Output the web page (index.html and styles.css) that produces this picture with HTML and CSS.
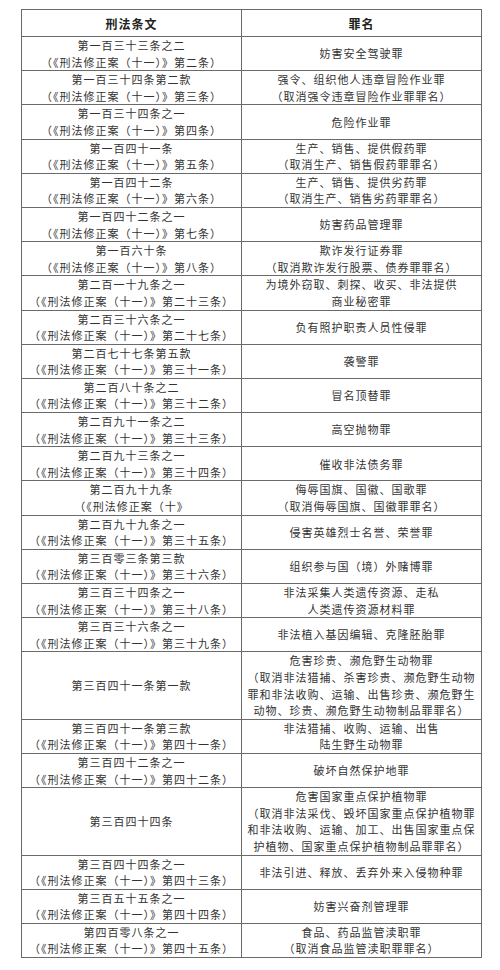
FILE: index.html
```html
<!DOCTYPE html>
<html lang="zh-CN">
<head>
<meta charset="utf-8">
<title>刑法条文与罪名</title>
<link rel="stylesheet" href="styles.css">
</head>
<body>
<table class="crimes">
  <colgroup><col class="c-law"><col class="c-name"></colgroup>
  <thead>
    <tr><th>刑法条文</th><th>罪名</th></tr>
  </thead>
  <tbody>
    <tr><td>第一百三十三条之二<br>（《刑法修正案（十一）》第二条）</td><td>妨害安全驾驶罪</td></tr>
    <tr><td>第一百三十四条第二款<br>（《刑法修正案（十一）》第三条）</td><td>强令、组织他人违章冒险作业罪<br>（取消强令违章冒险作业罪罪名）</td></tr>
    <tr><td>第一百三十四条之一<br>（《刑法修正案（十一）》第四条）</td><td>危险作业罪</td></tr>
    <tr><td>第一百四十一条<br>（《刑法修正案（十一）》第五条）</td><td>生产、销售、提供假药罪<br>（取消生产、销售假药罪罪名）</td></tr>
    <tr><td>第一百四十二条<br>（《刑法修正案（十一）》第六条）</td><td>生产、销售、提供劣药罪<br>（取消生产、销售劣药罪罪名）</td></tr>
    <tr><td>第一百四十二条之一<br>（《刑法修正案（十一）》第七条）</td><td>妨害药品管理罪</td></tr>
    <tr><td>第一百六十条<br>（《刑法修正案（十一）》第八条）</td><td>欺诈发行证券罪<br>（取消欺诈发行股票、债券罪罪名）</td></tr>
    <tr><td>第二百一十九条之一<br>（《刑法修正案（十一）》第二十三条）</td><td>为境外窃取、刺探、收买、非法提供<br>商业秘密罪</td></tr>
    <tr><td>第二百三十六条之一<br>（《刑法修正案（十一）》第二十七条）</td><td>负有照护职责人员性侵罪</td></tr>
    <tr><td>第二百七十七条第五款<br>（《刑法修正案（十一）》第三十一条）</td><td>袭警罪</td></tr>
    <tr><td>第二百八十条之二<br>（《刑法修正案（十一）》第三十二条）</td><td>冒名顶替罪</td></tr>
    <tr><td>第二百九十一条之二<br>（《刑法修正案（十一）》第三十三条）</td><td>高空抛物罪</td></tr>
    <tr><td>第二百九十三条之一<br>（《刑法修正案（十一）》第三十四条）</td><td>催收非法债务罪</td></tr>
    <tr><td>第二百九十九条<br>（《刑法修正案（十》</td><td>侮辱国旗、国徽、国歌罪<br>（取消侮辱国旗、国徽罪罪名）</td></tr>
    <tr><td>第二百九十九条之一<br>（《刑法修正案（十一）》第三十五条）</td><td>侵害英雄烈士名誉、荣誉罪</td></tr>
    <tr><td>第三百零三条第三款<br>（《刑法修正案（十一）》第三十六条）</td><td>组织参与国（境）外赌博罪</td></tr>
    <tr><td>第三百三十四条之一<br>（《刑法修正案（十一）》第三十八条）</td><td>非法采集人类遗传资源、走私<br>人类遗传资源材料罪</td></tr>
    <tr><td>第三百三十六条之一<br>（《刑法修正案（十一）》第三十九条）</td><td>非法植入基因编辑、克隆胚胎罪</td></tr>
    <tr><td>第三百四十一条第一款</td><td>危害珍贵、濒危野生动物罪<br>（取消非法猎捕、杀害珍贵、濒危野生动物<br>罪和非法收购、运输、出售珍贵、濒危野生<br>动物、珍贵、濒危野生动物制品罪罪名）</td></tr>
    <tr><td>第三百四十一条第三款<br>（《刑法修正案（十一）》第四十一条）</td><td>非法猎捕、收购、运输、出售<br>陆生野生动物罪</td></tr>
    <tr><td>第三百四十二条之一<br>（《刑法修正案（十一）》第四十二条）</td><td>破坏自然保护地罪</td></tr>
    <tr><td>第三百四十四条</td><td>危害国家重点保护植物罪<br>（取消非法采伐、毁坏国家重点保护植物罪<br>和非法收购、运输、加工、出售国家重点保<br>护植物、国家重点保护植物制品罪罪名）</td></tr>
    <tr><td>第三百四十四条之一<br>（《刑法修正案（十一）》第四十三条）</td><td>非法引进、释放、丢弃外来入侵物种罪</td></tr>
    <tr><td>第三百五十五条之一<br>（《刑法修正案（十一）》第四十四条）</td><td>妨害兴奋剂管理罪</td></tr>
    <tr><td>第四百零八条之一<br>（《刑法修正案（十一）》第四十五条）</td><td>食品、药品监管渎职罪<br>（取消食品监管渎职罪罪名）</td></tr>
  </tbody>
</table>
</body>
</html>
```
FILE: styles.css
```css
html, body {
  margin: 0;
  padding: 0;
  background: #ffffff;
}
body {
  padding: 9px 0 0 21px;
  font-family: "Noto Sans CJK SC", "Noto Sans", sans-serif;
  color: #333333;
}
.crimes {
  border-collapse: collapse;
  width: 460px;
  table-layout: fixed;
}
.c-law { width: 220px; }
.c-name { width: 240px; }
.crimes th,
.crimes td {
  border: 1px solid #6a6a6a;
  text-align: center;
  vertical-align: middle;
  padding: 0;
  white-space: nowrap;
}
.crimes th {
  height: 26px;
  font-size: 12px;
  font-weight: bold;
  color: #222222;
  letter-spacing: 1px;
}
.crimes td {
  font-size: 11px;
  line-height: 16.6px;
  letter-spacing: 1px;
}
```
